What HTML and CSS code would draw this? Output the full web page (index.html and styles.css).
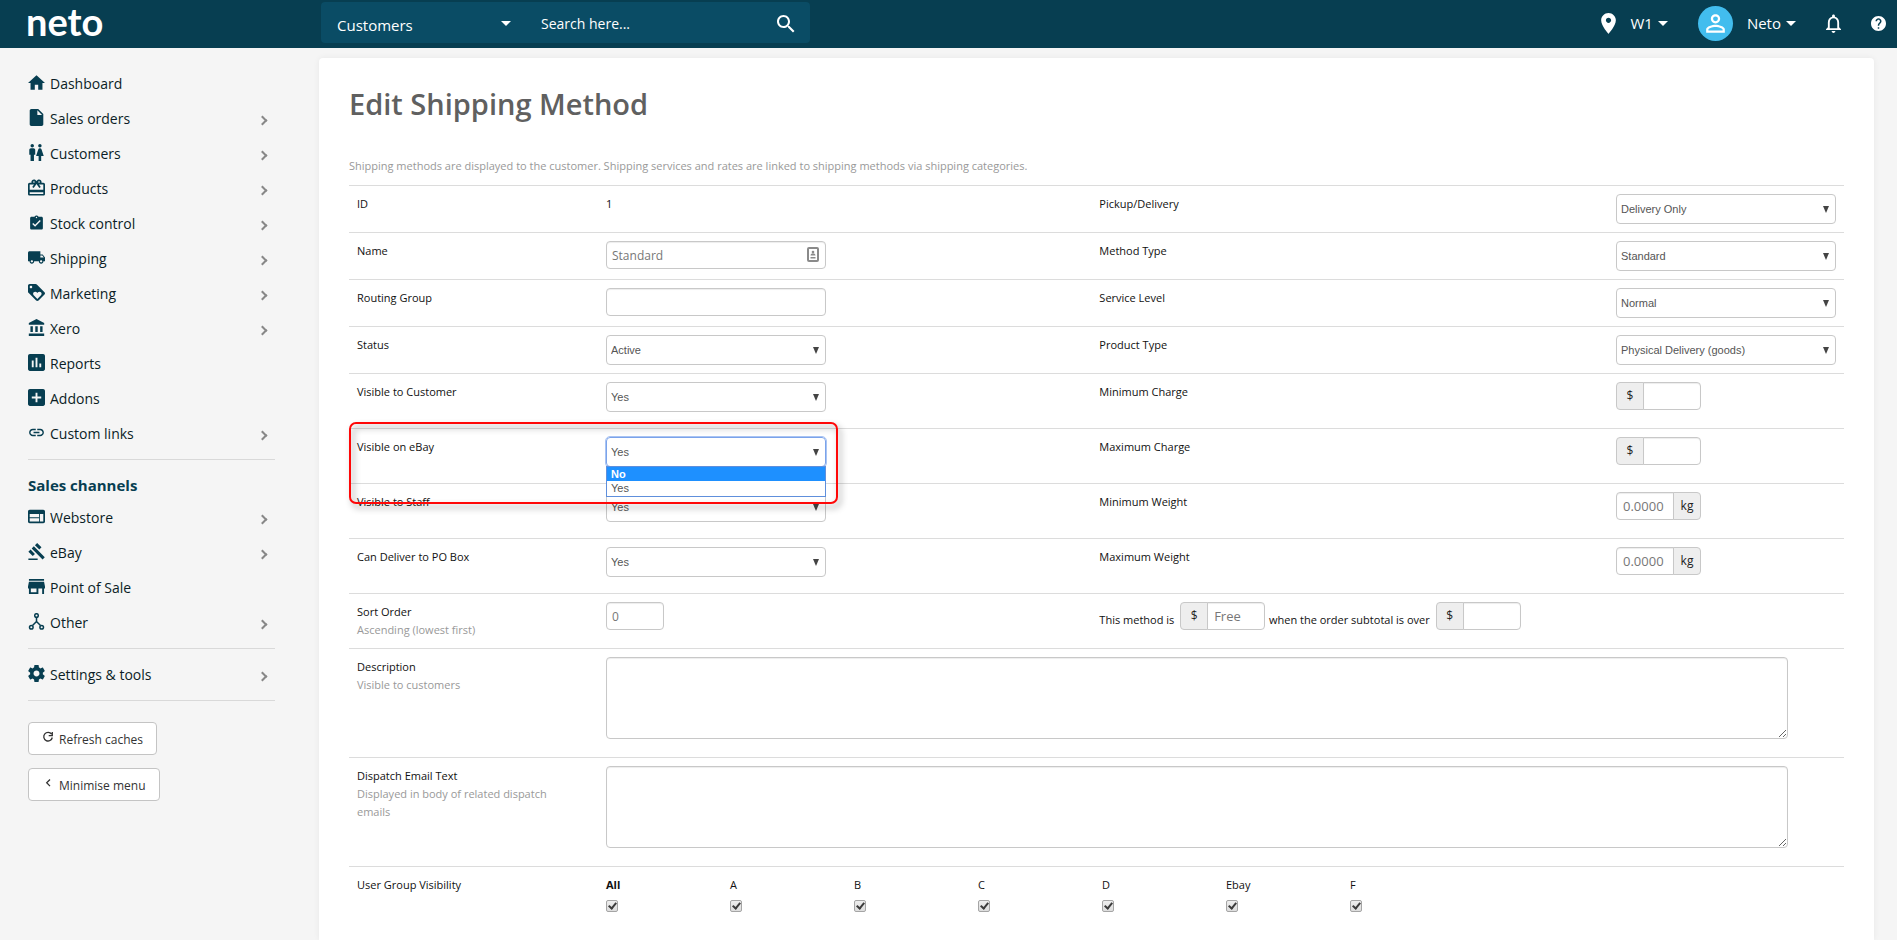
FILE: index.html
```html
<!DOCTYPE html>
<html lang="en">
<head>
    <meta charset="UTF-8">
    <meta name="viewport" content="width=device-width, initial-scale=1.0">
    <title>Edit Shipping Method</title>
    <link rel="stylesheet" href="styles.css">
</head>
<body>
    <header>
        <a class="logo" href="#">neto</a>
        <form class="search">
            <select class="search-type" aria-label="Search in">
                <option>Customers</option>
                <option>Sales orders</option>
                <option>Products</option>
            </select>
            <input type="text" class="search-text" placeholder="Search here..." aria-label="Search">
            <button type="submit" class="search-btn" aria-label="Search">
                <svg viewBox="3 3 18 18" width="18" height="18"><path d="M15.5 14h-.79l-.28-.27C15.41 12.59 16 11.11 16 9.5 16 5.91 13.09 3 9.5 3S3 5.91 3 9.5 5.91 16 9.5 16c1.61 0 3.09-.59 4.23-1.57l.27.28v.79l5 4.99L20.49 19l-4.99-5zm-6 0C7.01 14 5 11.99 5 9.5S7.01 5 9.5 5 14 7.01 14 9.5 11.99 14 9.5 14z"/></svg>
            </button>
        </form>
        <div class="tools">
            <button class="tool">
                <svg viewBox="5 2 14 20" width="15" height="21"><path d="M12 2C8.13 2 5 5.13 5 9c0 5.25 7 13 7 13s7-7.75 7-13c0-3.87-3.13-7-7-7zm0 9.5c-1.38 0-2.5-1.12-2.5-2.5s1.12-2.5 2.5-2.5 2.5 1.12 2.5 2.5-1.12 2.5-2.5 2.5z"/></svg>
                <span class="tool-name">W1</span>
                <span class="caret"></span>
            </button>
            <button class="tool user">
                <span class="avatar">
                    <svg viewBox="3 3 18 18" width="21" height="21"><path d="M12 5.9a2.1 2.1 0 1 1 0 4.2 2.1 2.1 0 0 1 0-4.2m0 9c2.97 0 6.1 1.46 6.1 2.1v1.1H5.9V17c0-.64 3.13-2.1 6.1-2.1M12 4C9.79 4 8 5.79 8 8s1.79 4 4 4 4-1.79 4-4-1.79-4-4-4zm0 9c-2.67 0-8 1.34-8 4v3h16v-3c0-2.66-5.33-4-8-4z"/></svg>
                </span>
                <span class="tool-name">Neto</span>
                <span class="caret"></span>
            </button>
            <button class="tool bell" aria-label="Notifications">
                <svg viewBox="4 2 16 20" width="15" height="19"><path d="M12 22c1.1 0 2-.9 2-2h-4c0 1.1.9 2 2 2zm6-6v-5c0-3.07-1.63-5.64-4.5-6.32V4c0-.83-.67-1.5-1.5-1.5s-1.5.67-1.5 1.5v.68C7.64 5.36 6 7.92 6 11v5l-2 2v1h16v-1l-2-2zm-2 1H8v-6c0-2.48 1.51-4.5 4-4.5s4 2.02 4 4.5v6z"/></svg>
            </button>
            <button class="tool help" aria-label="Help">
                <svg viewBox="2 2 20 20" width="15" height="15"><path d="M12 2C6.48 2 2 6.48 2 12s4.48 10 10 10 10-4.48 10-10S17.52 2 12 2zm1 17h-2v-2h2v2zm2.07-7.75l-.9.92C13.45 12.9 13 13.5 13 15h-2v-.5c0-1.1.45-2.1 1.17-2.83l1.24-1.26c.37-.36.59-.86.59-1.41 0-1.1-.9-2-2-2s-2 .9-2 2H8c0-2.21 1.79-4 4-4s4 1.79 4 4c0 .88-.36 1.68-.93 2.25z"/></svg>
            </button>
        </div>
    </header>

    <div class="page">
        <aside>
            <nav>
                <a href="#"><svg class="icon" viewBox="2 1.5 20 20"><path d="M10 20v-6h4v6h5v-8h3L12 3 2 12h3v8z"/></svg>Dashboard</a>
                <a href="#" class="more"><svg class="icon" viewBox="4 2 16 20"><path d="M6 2c-1.1 0-1.99.9-1.99 2L4 20c0 1.1.89 2 1.99 2H18c1.1 0 2-.9 2-2V8l-6-6H6zm7 7V3.5L18.5 9H13z"/></svg>Sales orders</a>
                <a href="#" class="more"><svg class="icon" viewBox="4 2 17 20"><path d="M5.5 22v-7.5H4V9c0-1.1.9-2 2-2h3c1.1 0 2 .9 2 2v5.5H9.5V22h-4zM18 22v-6h3l-2.54-7.63A2.01 2.01 0 0 0 16.56 7h-.12a2 2 0 0 0-1.9 1.37L12 16h3v6h3zM7.5 6c1.11 0 2-.89 2-2s-.89-2-2-2-2 .89-2 2 .89 2 2 2zm9 0c1.11 0 2-.89 2-2s-.89-2-2-2-2 .89-2 2 .89 2 2 2z"/></svg>Customers</a>
                <a href="#" class="more"><svg class="icon" viewBox="2 1.5 20 20"><path d="M20 6h-2.18c.11-.31.18-.65.18-1 0-1.66-1.34-3-3-3-1.05 0-1.96.54-2.5 1.35l-.5.67-.5-.68C10.96 2.54 10.05 2 9 2 7.34 2 6 3.34 6 5c0 .35.07.69.18 1H4c-1.11 0-1.99.89-1.99 2L2 19c0 1.11.89 2 2 2h16c1.11 0 2-.89 2-2V8c0-1.11-.89-2-2-2zm-5-2c.55 0 1 .45 1 1s-.45 1-1 1-1-.45-1-1 .45-1 1-1zM9 4c.55 0 1 .45 1 1s-.45 1-1 1-1-.45-1-1 .45-1 1-1zm11 15H4v-2h16v2zm0-5H4V8h5.08L7 10.83 8.62 12 11 8.76l1-1.36 1 1.36L15.38 12 17 10.83 14.92 8H20v6z"/></svg>Products</a>
                <a href="#" class="more"><svg class="icon" viewBox="0 -1 24 24"><path d="M19 3h-4.18C14.4 1.84 13.3 1 12 1c-1.3 0-2.4.84-2.82 2H5c-1.1 0-2 .9-2 2v14c0 1.1.9 2 2 2h14c1.1 0 2-.9 2-2V5c0-1.1-.9-2-2-2zm-7 0c.55 0 1 .45 1 1s-.45 1-1 1-1-.45-1-1 .45-1 1-1zm-2 14l-4-4 1.41-1.41L10 14.17l6.59-6.59L18 9l-8 8z"/></svg>Stock control</a>
                <a href="#" class="more"><svg class="icon" viewBox="1 1 22 22"><path d="M20 8h-3V4H3c-1.1 0-2 .9-2 2v11h2c0 1.66 1.34 3 3 3s3-1.34 3-3h6c0 1.66 1.34 3 3 3s3-1.34 3-3h2v-5l-3-4zM6 18.5c-.83 0-1.5-.67-1.5-1.5s.67-1.5 1.5-1.5 1.5.67 1.5 1.5-.67 1.5-1.5 1.5zm13.5-9l1.96 2.5H17V9.5h2.5zm-1.5 9c-.83 0-1.5-.67-1.5-1.5s.67-1.5 1.5-1.5 1.5.67 1.5 1.5-.67 1.5-1.5 1.5z"/></svg>Shipping</a>
                <a href="#" class="more"><svg class="icon" viewBox="2 2 20 20"><path d="M21.41 11.58l-9-9C12.05 2.22 11.55 2 11 2H4c-1.1 0-2 .9-2 2v7c0 .55.22 1.05.59 1.42l9 9c.36.36.86.58 1.41.58.55 0 1.05-.22 1.41-.59l7-7c.37-.36.59-.86.59-1.41 0-.55-.23-1.06-.59-1.42zM5.5 7C4.67 7 4 6.33 4 5.5S4.67 4 5.5 4 7 4.67 7 5.5 6.33 7 5.5 7zm11.77 8.27L13 19.54l-4.27-4.27C8.28 14.81 8 14.19 8 13.5c0-1.38 1.12-2.5 2.5-2.5.69 0 1.32.28 1.77.74l.73.72.73-.73c.45-.45 1.08-.73 1.77-.73 1.38 0 2.5 1.12 2.5 2.5 0 .69-.28 1.32-.73 1.77z"/></svg>Marketing</a>
                <a href="#" class="more"><svg class="icon" viewBox="2 1 19 21"><path d="M4 10v7h3v-7H4zm6 0v7h3v-7h-3zM2 22h19v-3H2v3zm14-12v7h3v-7h-3zm-4.5-9L2 6v2h19V6l-9.5-5z"/></svg>Xero</a>
                <a href="#"><svg class="icon" viewBox="3 3 18 18"><path d="M19 3H5c-1.1 0-2 .9-2 2v14c0 1.1.9 2 2 2h14c1.1 0 2-.9 2-2V5c0-1.1-.9-2-2-2zM9 17H7v-7h2v7zm4 0h-2V7h2v10zm4 0h-2v-4h2v4z"/></svg>Reports</a>
                <a href="#"><svg class="icon" viewBox="3 3 18 18"><path d="M19 3H5c-1.11 0-2 .9-2 2v14c0 1.1.89 2 2 2h14c1.1 0 2-.9 2-2V5c0-1.1-.9-2-2-2zm-2 10h-4v4h-2v-4H7v-2h4V7h2v4h4v2z"/></svg>Addons</a>
                <a href="#" class="more"><svg class="icon" viewBox="0.5 0.5 23 23"><path d="M3.9 12c0-1.71 1.39-3.1 3.1-3.1h4V7H7c-2.76 0-5 2.24-5 5s2.24 5 5 5h4v-1.9H7c-1.71 0-3.1-1.39-3.1-3.1zM8 13h8v-2H8v2zm9-6h-4v1.9h4c1.71 0 3.1 1.39 3.1 3.1s-1.39 3.1-3.1 3.1h-4V17h4c2.76 0 5-2.24 5-5s-2.24-5-5-5z"/></svg>Custom links</a>
            </nav>
            <h2>Sales channels</h2>
            <nav>
                <a href="#" class="more"><svg class="icon" viewBox="2 2 20 20"><path d="M20 4H4c-1.1 0-1.99.9-1.99 2L2 18c0 1.1.9 2 2 2h16c1.1 0 2-.9 2-2V6c0-1.1-.9-2-2-2zm-5 14H4v-4h11v4zm0-5H4V9h11v4zm5 5h-4V9h4v9z"/></svg>Webstore</a>
                <a href="#" class="more"><svg class="icon" viewBox="0.5 1 22 22"><path d="M1 21h12v2H1zM5.245 8.07l2.83-2.827 14.14 14.142-2.828 2.828zM12.317 1l5.657 5.656-2.83 2.83-5.654-5.66zM3.825 9.485l5.657 5.657-2.828 2.828-5.657-5.657z"/></svg>eBay</a>
                <a href="#"><svg class="icon" viewBox="3 3 18 18"><path d="M20 4H4v2h16V4zm1 10v-2l-1-5H4l-1 5v2h1v6h10v-6h4v6h2v-6h1zm-9 4H6v-4h6v4z"/></svg>Point of Sale</a>
                <a href="#" class="more"><svg class="icon line" viewBox="0 0 17 17"><circle cx="8.5" cy="2.5" r="1.8"/><circle cx="3.3" cy="14.2" r="1.8"/><circle cx="13.7" cy="14.2" r="1.8"/><path d="M8.5 4.5v4.7M8.5 8.5l-4 4M8.5 8.5l4 4"/></svg>Other</a>
            </nav>
            <nav>
                <a href="#" class="more"><svg class="icon" viewBox="2 2 20 20"><path d="M19.43 12.98c.04-.32.07-.64.07-.98s-.03-.66-.07-.98l2.11-1.65c.19-.15.24-.42.12-.64l-2-3.46c-.12-.22-.39-.3-.61-.22l-2.49 1c-.52-.4-1.08-.73-1.69-.98l-.38-2.65C14.46 2.18 14.25 2 14 2h-4c-.25 0-.46.18-.49.42l-.38 2.65c-.61.25-1.17.59-1.69.98l-2.49-1c-.23-.09-.49 0-.61.22l-2 3.46c-.13.22-.07.49.12.64l2.11 1.65c-.04.32-.07.65-.07.98s.03.66.07.98l-2.11 1.65c-.19.15-.24.42-.12.64l2 3.46c.12.22.39.3.61.22l2.49-1c.52.4 1.08.73 1.69.98l.38 2.65c.03.24.24.42.49.42h4c.25 0 .46-.18.49-.42l.38-2.65c.61-.25 1.17-.59 1.69-.98l2.49 1c.23.09.49 0 .61-.22l2-3.46c.12-.22.07-.49-.12-.64l-2.11-1.65zM12 15.5c-1.93 0-3.5-1.57-3.5-3.5s1.57-3.5 3.5-3.5 3.5 1.57 3.5 3.5-1.57 3.5-3.5 3.5z"/></svg>Settings &amp; tools</a>
            </nav>
            <div class="side-buttons">
                <button><svg viewBox="0 0 12 12" width="12" height="12"><path d="M9.6 3.2A4.3 4.3 0 1 0 10.3 6.5M10.3 1v3.6H6.7"/></svg>Refresh caches</button>
                <button><svg viewBox="0 0 12 12" width="12" height="12"><path d="M8 2.5L4.7 5.8 8 9.1"/></svg>Minimise menu</button>
            </div>
        </aside>

        <main>
            <h1>Edit Shipping Method</h1>
            <p class="intro">Shipping methods are displayed to the customer. Shipping services and rates are linked to shipping methods via shipping categories.</p>

            <table>
                <colgroup>
                    <col class="col-label">
                    <col class="col-field">
                    <col>
                    <col class="col-last">
                </colgroup>
                <tr>
                    <th>ID</th>
                    <td class="text">1</td>
                    <th><label for="pickup">Pickup/Delivery</label></th>
                    <td><select id="pickup"><option>Delivery Only</option></select></td>
                </tr>
                <tr>
                    <th><label for="name">Name</label></th>
                    <td>
                        <div class="autofill">
                            <input type="text" id="name" value="Standard">
                            <svg viewBox="0 0 12 15" width="12" height="15"><rect x="1" y="1" width="10" height="13" rx="1" fill="none" stroke="#8a8a8a" stroke-width="2"/><circle cx="6" cy="5" r="1.3"/><path d="M3.5 8.5C3.5 7 5 6.3 6 6.3s2.500.7 2.500 2.200zM3.500 10h5v1.500h-5z"/></svg>
                        </div>
                    </td>
                    <th><label for="method">Method Type</label></th>
                    <td><select id="method"><option>Standard</option></select></td>
                </tr>
                <tr>
                    <th><label for="routing">Routing Group</label></th>
                    <td><input type="text" id="routing"></td>
                    <th><label for="service">Service Level</label></th>
                    <td><select id="service"><option>Normal</option></select></td>
                </tr>
                <tr>
                    <th><label for="status">Status</label></th>
                    <td><select id="status"><option>Active</option></select></td>
                    <th><label for="product">Product Type</label></th>
                    <td><select id="product"><option>Physical Delivery (goods)</option></select></td>
                </tr>
                <tr>
                    <th><label for="customer">Visible to Customer</label></th>
                    <td><select id="customer"><option>Yes</option><option>No</option></select></td>
                    <th><label for="minCharge">Minimum Charge</label></th>
                    <td><div class="group"><span>$</span><input type="text" id="minCharge"></div></td>
                </tr>
                <tr>
                    <th class="marked"><label for="ebay">Visible on eBay</label><div class="marker"></div></th>
                    <td>
                        <div class="dropdown">
                            <select id="ebay" class="open"><option>Yes</option><option>No</option></select>
                            <ul class="options">
                                <li class="active">No</li>
                                <li>Yes</li>
                            </ul>
                        </div>
                    </td>
                    <th><label for="maxCharge">Maximum Charge</label></th>
                    <td><div class="group"><span>$</span><input type="text" id="maxCharge"></div></td>
                </tr>
                <tr>
                    <th><label for="staff">Visible to Staff</label></th>
                    <td><select id="staff"><option>Yes</option><option>No</option></select></td>
                    <th><label for="minWeight">Minimum Weight</label></th>
                    <td><div class="group"><input type="text" id="minWeight" value="0.0000"><span>kg</span></div></td>
                </tr>
                <tr>
                    <th><label for="pobox">Can Deliver to PO Box</label></th>
                    <td><select id="pobox"><option>Yes</option><option>No</option></select></td>
                    <th><label for="maxWeight">Maximum Weight</label></th>
                    <td><div class="group"><input type="text" id="maxWeight" value="0.0000"><span>kg</span></div></td>
                </tr>
                <tr>
                    <th><label for="sort">Sort Order</label><small>Ascending (lowest first)</small></th>
                    <td><input type="text" id="sort" class="short" value="0"></td>
                    <td colspan="2" class="sentence">
                        <label for="free">This method is</label>
                        <div class="group"><span>$</span><input type="text" id="free" value="Free"></div>
                        <label for="over">when the order subtotal is over</label>
                        <div class="group"><span>$</span><input type="text" id="over"></div>
                    </td>
                </tr>
                <tr>
                    <th><label for="description">Description</label><small>Visible to customers</small></th>
                    <td colspan="3"><textarea id="description"></textarea></td>
                </tr>
                <tr>
                    <th><label for="dispatch">Dispatch Email Text</label><small>Displayed in body of related dispatch emails</small></th>
                    <td colspan="3"><textarea id="dispatch"></textarea></td>
                </tr>
                <tr>
                    <th>User Group Visibility</th>
                    <td colspan="3" class="text">
                        <div class="checks">
                            <label class="all">All<input type="checkbox" checked></label>
                            <label>A<input type="checkbox" checked></label>
                            <label>B<input type="checkbox" checked></label>
                            <label>C<input type="checkbox" checked></label>
                            <label>D<input type="checkbox" checked></label>
                            <label>Ebay<input type="checkbox" checked></label>
                            <label>F<input type="checkbox" checked></label>
                        </div>
                    </td>
                </tr>
            </table>
        </main>
    </div>
</body>
</html>
```

FILE: styles.css
```css
/* General Styles */
*, *::after {
    box-sizing: border-box;
}
body {
    margin: 0;
    font-family: "Segoe UI", "Open Sans", sans-serif;
    font-size: 11px;
    line-height: 18px;
    color: #333;
    background-color: #f5f5f5;
}
button, input, select, textarea {
    font-family: inherit;
    font-size: inherit;
    margin: 0;
}
button {
    cursor: pointer;
}
a {
    text-decoration: none;
}

/* Header */
header {
    display: flex;
    align-items: flex-start;
    height: 48px;
    background-color: #073e51;
    color: white;
}
header svg {
    fill: white;
}
.logo {
    width: 321px;
    padding-left: 26px;
    font-family: Lato, sans-serif;
    font-size: 38px;
    font-weight: bold;
    line-height: 42px;
    color: white;
}
.search {
    display: flex;
    align-items: center;
    width: 489px;
    height: 41px;
    margin-top: 2px;
    border-radius: 4px;
    background-color: #0a4c65;
}
.search-type {
    appearance: none;
    width: 204px;
    height: 41px;
    padding: 4px 16px 0;
    border: none;
    font-size: 15px;
    color: white;
    background: url("data:image/svg+xml,%3Csvg xmlns='http://www.w3.org/2000/svg' width='10' height='5'%3E%3Cpath d='M0 0h10L5 5z' fill='white'/%3E%3C/svg%3E") no-repeat 180px 19px;
}
.search-text {
    flex: 1;
    min-width: 0;
    height: 41px;
    padding: 2px 0 0 16px;
    border: none;
    font-size: 14px;
    color: white;
    background: none;
}
.search-text::placeholder {
    color: white;
    opacity: 1;
}
.search-btn {
    display: flex;
    padding: 2px 15px 0;
    border: none;
    background: none;
}
.tools {
    display: flex;
    align-items: center;
    height: 47px;
    margin-left: auto;
    padding-right: 11px;
}
.tool {
    display: flex;
    align-items: center;
    padding: 0;
    border: none;
    background: none;
    color: white;
    font-size: 15px;
}
.tool-name {
    margin: 0 5px 2px 14px;
}
.caret {
    border: 5px solid transparent;
    border-top-color: white;
    border-bottom: none;
}
.user {
    margin: 0 30px;
}
.avatar {
    display: flex;
    align-items: center;
    justify-content: center;
    width: 35px;
    height: 35px;
    border-radius: 50%;
    background-color: #42bdee;
}
.help {
    margin-left: 30px;
}

/* Sidebar */
.page {
    display: flex;
}
aside {
    flex: none;
    width: 319px;
    padding: 19px 44px 0 28px;
}
aside nav {
    padding-bottom: 7px;
    border-bottom: 1px solid #d9d9d9;
}
aside nav + nav {
    padding-top: 9px;
}
aside nav a {
    display: flex;
    align-items: center;
    height: 35px;
    padding-bottom: 2px;
    font-size: 14px;
    color: #0b1d26;
}
.icon {
    width: 17px;
    height: 17px;
    margin: 0 5px 2px 0;
    fill: #073e51;
}
.icon.line {
    fill: none;
    stroke: #073e51;
    stroke-width: 1.5;
}
.more::after {
    content: "";
    width: 7px;
    height: 7px;
    margin: 4px 9px 0 auto;
    border: solid #888;
    border-width: 2px 2px 0 0;
    transform: rotate(45deg);
}
aside h2 {
    margin: 0;
    padding: 11px 0 2px;
    font-size: 15px;
    line-height: 28px;
    color: #073e51;
}
.side-buttons {
    display: flex;
    flex-direction: column;
    align-items: flex-start;
    gap: 13px;
    padding-top: 21px;
}
.side-buttons button {
    display: flex;
    align-items: center;
    height: 33px;
    padding: 1px 13px 0;
    border: 1px solid #c4c4c4;
    border-radius: 4px;
    background-color: white;
    font-size: 12px;
    color: #333;
}
.side-buttons svg {
    margin: 0 5px 4px 0;
    fill: none;
    stroke: #333;
    stroke-width: 1.3;
}

/* Main Content */
main {
    flex: 1;
    min-width: 0;
    min-height: calc(100vh - 58px);
    margin: 10px 23px 0 0;
    padding: 26px 30px 0;
    border-radius: 4px 4px 0 0;
    background-color: white;
    box-shadow: 0 0 6px rgba(0, 0, 0, 0.06);
}
h1 {
    margin: 0;
    font-size: 29px;
    font-weight: 600;
    line-height: 40px;
    color: #606060;
}
.intro {
    margin: 33px 0 10px;
    color: #999;
}

/* Form Table */
table {
    width: 100%;
    table-layout: fixed;
    border-collapse: collapse;
    color: #333;
}
.col-label {
    width: 249px;
}
.col-field {
    width: 33%;
}
.col-last {
    width: 236px;
}
th, td {
    padding: 8px;
    border-top: 1px solid #dcdcdc;
    text-align: left;
    vertical-align: top;
    font-weight: normal;
}
th, td.text {
    padding-top: 9px;
    color: #111;
}
small {
    display: block;
    padding-right: 30px;
    font-size: inherit;
    color: #999;
}
table select, table input[type="text"], textarea {
    display: block;
    width: 220px;
    border: 1px solid #c8c8c8;
    border-radius: 4px;
    background-color: white;
}
table select {
    appearance: none;
    height: 30px;
    padding: 0 4px;
    font-family: "Liberation Sans", Arial, sans-serif;
    font-size: 11px;
    color: #555;
    background: white url("data:image/svg+xml,%3Csvg xmlns='http://www.w3.org/2000/svg' width='6' height='7'%3E%3Cpath d='M0 0h6L3 7z' fill='%23444'/%3E%3C/svg%3E") no-repeat right 6px center;
}
table input[type="text"], textarea {
    height: 28px;
    padding: 4px 5px;
    font-size: 12px;
    color: #777;
    box-shadow: inset 0 1px 1px rgba(0, 0, 0, 0.075);
}
table input.short {
    width: 58px;
}
textarea {
    width: calc(95% + 13px);
    height: 82px;
    margin-bottom: 10px;
    resize: vertical;
}
.autofill, .dropdown {
    position: relative;
    width: 220px;
}
.autofill svg {
    position: absolute;
    top: 6px;
    right: 7px;
    fill: #8a8a8a;
}

/* Inputs with a unit */
.group {
    display: flex;
    width: 85px;
    margin-bottom: 10px;
    font-size: 12px;
}
.group span {
    flex: none;
    width: 28px;
    height: 28px;
    border: 1px solid #c8c8c8;
    line-height: 26px;
    text-align: center;
    background-color: #eee;
    color: #222;
}
.group input[type="text"] {
    width: 58px;
    padding-left: 6px;
    font-size: 13px;
}
.group > :first-child {
    border-radius: 4px 0 0 4px;
}
.group > :last-child {
    margin-left: -1px;
    border-radius: 0 4px 4px 0;
}
.sentence {
    color: #111;
}
.sentence .group {
    display: inline-flex;
    margin-left: 3px;
    margin-right: 1px;
    vertical-align: middle;
}

/* Open drop-down */
table select.open {
    border-color: #7ba3ea;
    outline: 1px solid #a9c4f3;
}
.options {
    position: absolute;
    z-index: 1;
    top: 29px;
    left: 0;
    width: 220px;
    margin: 0;
    padding: 0 0 1px;
    border: 1px solid #5f8fdc;
    list-style: none;
    font-family: "Liberation Sans", Arial, sans-serif;
    font-size: 11px;
    line-height: 14px;
    color: #555;
    background-color: white;
}
.options li {
    padding: 0 4px;
}
.options .active {
    font-weight: bold;
    color: white;
    background-color: #1e90ff;
}
.marked {
    position: relative;
}
.marker {
    position: absolute;
    z-index: 2;
    top: -7px;
    left: 0;
    width: 489px;
    height: 82px;
    border: 2px solid #ff0808;
    border-radius: 7px;
    filter: drop-shadow(3px 4px 3px rgba(0, 0, 0, 0.4));
    pointer-events: none;
}

/* User groups */
.checks {
    display: flex;
}
.checks label {
    width: 124px;
}
.checks .all {
    font-weight: bold;
}
.checks input {
    appearance: none;
    display: block;
    position: relative;
    width: 12px;
    height: 12px;
    margin-top: 6px;
    border: 1px solid #a5a5a5;
    border-radius: 2px;
    background: linear-gradient(#eee, #ddd);
}
.checks input:checked::after {
    content: "";
    position: absolute;
    top: 0;
    left: 3px;
    width: 5px;
    height: 8px;
    border: solid #3c3c3c;
    border-width: 0 2px 2px 0;
    transform: rotate(40deg);
}
```
